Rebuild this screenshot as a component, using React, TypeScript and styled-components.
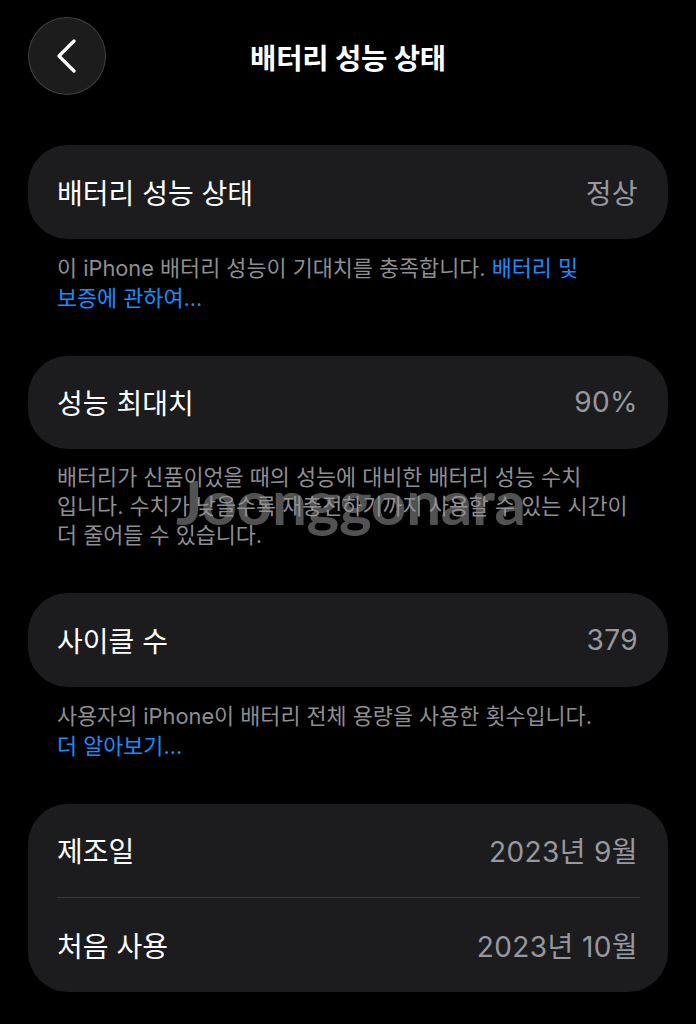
import React from 'react';
import styled, { createGlobalStyle } from 'styled-components';

const GlobalStyle = createGlobalStyle`
  html, body {
    margin: 0;
    padding: 0;
    background: #000;
  }
  body {
    font-family: 'Inter', 'Noto Sans CJK KR', sans-serif;
    -webkit-font-smoothing: antialiased;
  }
`;

const Page = styled.div`
  position: relative;
  width: 696px;
  min-height: 1024px;
  box-sizing: border-box;
  padding: 17px 28px 0;
  background: #000;
  color: #fff;
`;

const Header = styled.header`
  display: grid;
  grid-template-columns: 78px 1fr 78px;
  align-items: center;
  height: 78px;
  margin-bottom: 50px;
`;

const BackButton = styled.button`
  width: 78px;
  height: 78px;
  border-radius: 50%;
  border: none;
  padding: 0;
  background: #1c1c1c;
  box-shadow: inset 0 0 0 1px rgba(255, 255, 255, 0.16);
  display: flex;
  align-items: center;
  justify-content: center;
  cursor: pointer;
`;

const Title = styled.h1`
  margin: 0;
  text-align: center;
  font-size: 28.6px;
  font-weight: 700;
  letter-spacing: -0.2px;
  color: #fff;
`;

const Section = styled.section`
  margin-bottom: 43px;
`;

const Card = styled.div`
  background: #1c1c1e;
  border-radius: 40px;
  overflow: hidden;
`;

const Row = styled.div`
  display: flex;
  align-items: center;
  justify-content: space-between;
  height: 93.5px;
  padding: 0 30px 0 29px;
  font-size: 28px;
`;

const Divider = styled.div`
  height: 1px;
  margin: 0 28px 0 29px;
  background: #3a3a3c;
`;

const Label = styled.span`
  color: #fff;
`;

const Value = styled.span`
  color: #98989f;
  letter-spacing: 0.4px;
`;

const Footnote = styled.p<{ $tight?: boolean }>`
  margin: 0;
  padding: 14px 29px 0;
  font-size: 21.8px;
  line-height: ${(p) => (p.$tight ? '29px' : '30px')};
  color: #8e8e93;
  white-space: nowrap;
`;

const Link = styled.a`
  color: #1a8cff;
  text-decoration: none;
`;

const Watermark = styled.div`
  position: absolute;
  left: 176px;
  top: 464px;
  font-family: 'Lato', sans-serif;
  font-size: 62px;
  font-weight: 700;
  letter-spacing: -0.3px;
  color: rgba(150, 150, 150, 0.55);
  pointer-events: none;
`;

const Chevron = () => (
  <svg width="22" height="34" viewBox="0 0 22 34" fill="none">
    <path
      d="M18 2 L3 17 L18 32"
      stroke="#fff"
      strokeWidth="3.2"
      strokeLinecap="round"
      strokeLinejoin="round"
    />
  </svg>
);

export default function App() {
  return (
    <>
      <GlobalStyle />
      <Page>
        <Header>
          <BackButton aria-label="뒤로">
            <Chevron />
          </BackButton>
          <Title>배터리 성능 상태</Title>
          <span />
        </Header>

        <Section>
          <Card>
            <Row>
              <Label>배터리 성능 상태</Label>
              <Value>정상</Value>
            </Row>
          </Card>
          <Footnote>
            이 iPhone 배터리 성능이 기대치를 충족합니다. <Link>배터리 및</Link>
            <br />
            <Link>보증에 관하여...</Link>
          </Footnote>
        </Section>

        <Section>
          <Card>
            <Row>
              <Label>성능 최대치</Label>
              <Value>90%</Value>
            </Row>
          </Card>
          <Footnote $tight>
            배터리가 신품이었을 때의 성능에 대비한 배터리 성능 수치
            <br />
            입니다. 수치가 낮을수록 재충전하기까지 사용할 수 있는 시간이
            <br />더 줄어들 수 있습니다.
          </Footnote>
        </Section>

        <Section>
          <Card>
            <Row>
              <Label>사이클 수</Label>
              <Value>379</Value>
            </Row>
          </Card>
          <Footnote>
            사용자의 iPhone이 배터리 전체 용량을 사용한 횟수입니다.
            <br />
            <Link>더 알아보기...</Link>
          </Footnote>
        </Section>

        <Section>
          <Card>
            <Row>
              <Label>제조일</Label>
              <Value>2023년 9월</Value>
            </Row>
            <Divider />
            <Row>
              <Label>처음 사용</Label>
              <Value>2023년 10월</Value>
            </Row>
          </Card>
        </Section>

        <Watermark>Joonggonara</Watermark>
      </Page>
    </>
  );
}
